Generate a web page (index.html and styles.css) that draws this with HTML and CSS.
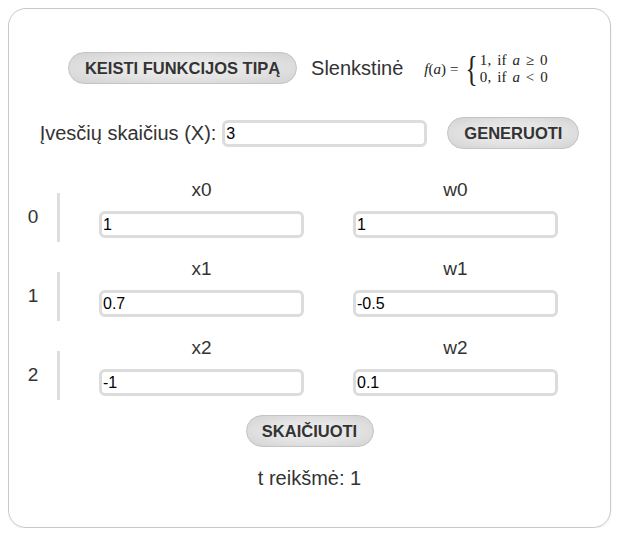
FILE: index.html
```html
<!DOCTYPE html>
<html lang="lt">
<head>
<meta charset="utf-8">
<title>Perceptronas</title>
<link rel="stylesheet" href="styles.css">
</head>
<body>
<div class="card">
  <div class="top-row">
    <button class="btn btn-type">KEISTI FUNKCIJOS TIPĄ</button>
    <span class="fn-name">Slenkstinė</span>
    <span class="formula">
      <span class="lhs"><i>f</i>(<i>a</i>)<span class="eq">=</span></span>
      <span class="brace">{</span>
      <span class="cases">
        <span>1, if <i>a</i> ≥ 0</span>
        <span>0, if <i>a</i> &lt; 0</span>
      </span>
    </span>
  </div>
  <div class="count-row">
    <label class="count-label" for="cnt">Įvesčių skaičius (X):</label>
    <input id="cnt" class="inp inp-count" type="text" value="3">
    <button class="btn btn-gen">GENERUOTI</button>
  </div>
  <div class="rows">
    <div class="row">
      <div class="idx">0</div>
      <div class="bar"></div>
      <div class="field"><div class="flabel">x0</div><input class="inp" type="text" value="1"></div>
      <div class="field"><div class="flabel">w0</div><input class="inp" type="text" value="1"></div>
    </div>
    <div class="row">
      <div class="idx">1</div>
      <div class="bar"></div>
      <div class="field"><div class="flabel">x1</div><input class="inp" type="text" value="0.7"></div>
      <div class="field"><div class="flabel">w1</div><input class="inp" type="text" value="-0.5"></div>
    </div>
    <div class="row">
      <div class="idx">2</div>
      <div class="bar"></div>
      <div class="field"><div class="flabel">x2</div><input class="inp" type="text" value="-1"></div>
      <div class="field"><div class="flabel">w2</div><input class="inp" type="text" value="0.1"></div>
    </div>
  </div>
  <div class="calc-row">
    <button class="btn btn-calc">SKAIČIUOTI</button>
  </div>
  <div class="result">t reikšmė: 1</div>
</div>
</body>
</html>
```

FILE: styles.css
```css
* { box-sizing: border-box; }
html, body { background: #fff; }
body {
  margin: 8px;
  font-family: "Liberation Sans", Arial, sans-serif;
  color: #333;
}
.card {
  width: 603px;
  height: 520px;
  border: 1px solid #c8c8c8;
  border-radius: 18px;
  padding-top: 43px;
  box-shadow: 0 1px 2px rgba(0,0,0,0.08);
}
.btn {
  font-family: "Liberation Sans", Arial, sans-serif;
  font-weight: bold;
  font-size: 16.5px;
  color: #333;
  border: 1px solid #c4c4c4;
  border-radius: 16px;
  background: radial-gradient(ellipse at center, #efefef 0%, #e2e2e2 55%, #d2d2d2 100%);
  height: 32px;
  padding: 0;
  cursor: pointer;
}
.top-row {
  display: flex;
  align-items: center;
  justify-content: center;
  height: 32px;
  margin-right: 3px;
}
.btn-type { width: 229px; }
.fn-name {
  font-size: 20px;
  margin-left: 14px;
  margin-right: 21px;
}
.formula {
  display: inline-flex;
  align-items: center;
  font-family: "Liberation Serif", "Times New Roman", serif;
  font-size: 15px;
  color: #222;
  margin-top: 2px;
}
.lhs { white-space: nowrap; }
.eq { margin: 0 5px 0 4px; }
.brace {
  font-size: 36px;
  line-height: 32px;
  transform: scaleX(0.7);
  margin: 0 -1px 0 0;
  font-weight: normal;
}
.cases {
  display: flex;
  flex-direction: column;
  line-height: 17px;
  white-space: nowrap;
  word-spacing: 1.5px;
  letter-spacing: 0.3px;
}
.count-row {
  display: flex;
  align-items: center;
  justify-content: center;
  margin-top: 33px;
  height: 32px;
}
.count-label { font-size: 20px; margin-right: 6px; }
.inp {
  width: 205px;
  height: 27px;
  border: 3px solid #dcdcdc;
  border-radius: 6px;
  font-family: "Liberation Sans", Arial, sans-serif;
  font-size: 16px;
  color: #000;
  padding: 1px 1px 0;
  outline: none;
  background: #fff;
}
.inp-count { height: 27px; margin-right: 20px; }
.btn-gen { width: 132px; }
.rows {
  margin-top: 30px;
  display: flex;
  flex-direction: column;
  gap: 20px;
}
.row {
  display: flex;
  align-items: flex-start;
  height: 59px;
}
.idx {
  width: 48px;
  text-align: center;
  font-size: 19px;
  line-height: 22px;
  margin-top: 27px;
}
.bar {
  width: 3px;
  height: 49px;
  background: #dedede;
  margin-top: 14px;
  margin-right: 39px;
}
.field {
  display: flex;
  flex-direction: column;
  align-items: center;
  width: 205px;
  margin-right: 49px;
}
.flabel {
  font-size: 19px;
  line-height: 22px;
  margin-bottom: 10px;
}
.calc-row {
  display: flex;
  justify-content: center;
  margin-top: 19px;
}
.btn-calc { width: 128px; }
.result {
  text-align: center;
  font-size: 20px;
  margin-top: 20px;
  line-height: 22px;
}
```
